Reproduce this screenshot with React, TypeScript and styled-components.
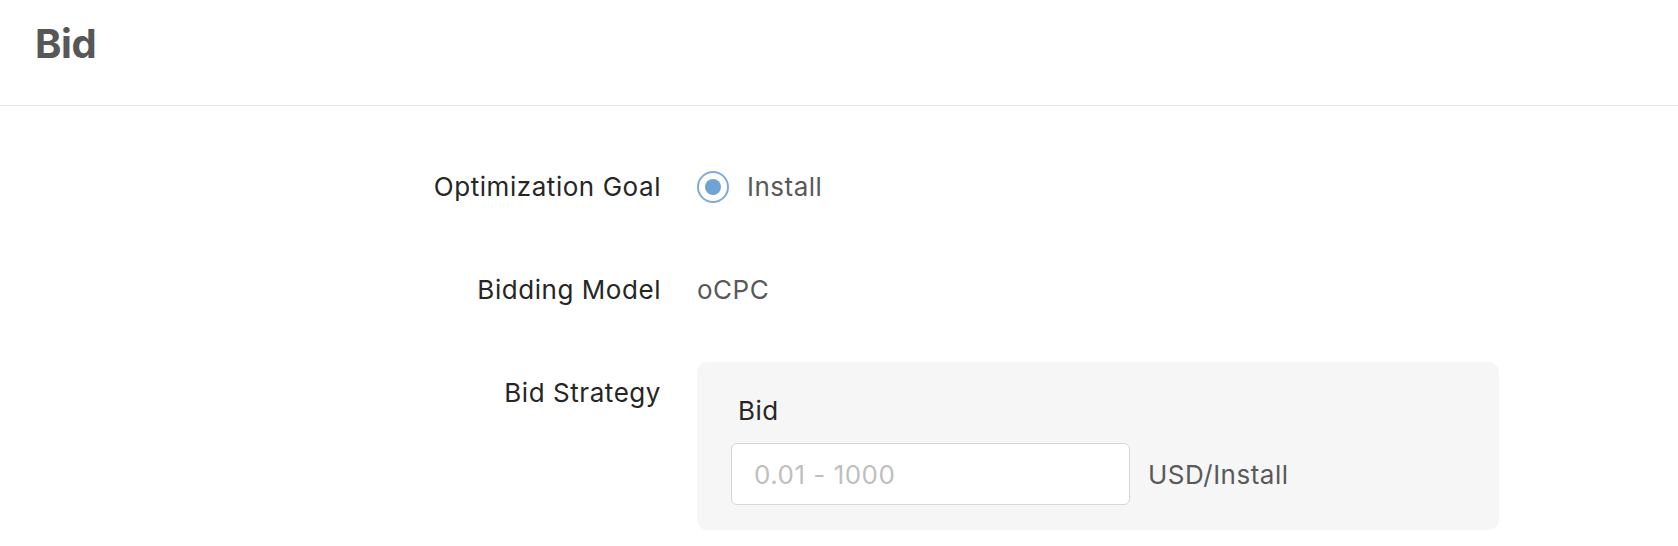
import styled, { createGlobalStyle } from "styled-components";

const GlobalStyle = createGlobalStyle`
  html, body {
    margin: 0;
    padding: 0;
    background: #fff;
    font-family: Inter, "Noto Sans", "Liberation Sans", sans-serif;
  }
  * { box-sizing: border-box; }
`;

const Page = styled.div`
  width: 100%;
  min-height: 546px;
  background: #fff;
`;

const Header = styled.header`
  height: 106px;
  padding: 20px 35px 0;
  border-bottom: 1px solid #e6e6e6;
`;

const Title = styled.h1`
  margin: 0;
  font-size: 40px;
  line-height: 48px;
  font-weight: 700;
  color: #575757;
  letter-spacing: -0.4px;
`;

const Form = styled.div`
  padding-top: 53px;
`;

const Row = styled.div<{ $top?: number; $align?: string }>`
  display: grid;
  grid-template-columns: 661px 1fr;
  column-gap: 36px;
  align-items: ${(p) => p.$align || "center"};
  margin-top: ${(p) => p.$top || 0}px;
  min-height: 56px;
`;

const Label = styled.div<{ $pad?: number }>`
  text-align: right;
  font-size: 26px;
  line-height: 40px;
  letter-spacing: 0.55px;
  color: #262626;
  padding-top: ${(p) => p.$pad || 0}px;
`;

const Value = styled.div`
  font-size: 26px;
  line-height: 40px;
  letter-spacing: 0.5px;
  color: #595959;
`;

const RadioLabel = styled.label`
  display: inline-flex;
  align-items: center;
  gap: 18px;
  font-size: 26px;
  line-height: 40px;
  letter-spacing: 0.5px;
  color: #595959;
`;

const RadioCircle = styled.span`
  width: 32px;
  height: 32px;
  border-radius: 50%;
  border: 2px solid #7eabd9;
  display: flex;
  align-items: center;
  justify-content: center;
  background: #fff;

  &::after {
    content: "";
    width: 16px;
    height: 16px;
    border-radius: 50%;
    background: #6fa3d6;
  }
`;

const StrategyBox = styled.div`
  width: 802px;
  height: 168px;
  background: #f6f6f6;
  border-radius: 10px;
  padding: 31px 34px 0;
`;

const SubLabel = styled.div`
  font-size: 26px;
  line-height: 36px;
  letter-spacing: 0.5px;
  color: #262626;
  margin-bottom: 14px;
  padding-left: 7px;
`;

const InputLine = styled.div`
  display: flex;
  align-items: center;
  gap: 18px;
`;

const Input = styled.input`
  width: 399px;
  height: 62px;
  border: 1px solid #d6d6d6;
  border-radius: 6px;
  background: #fff;
  padding: 0 22px;
  font-family: inherit;
  font-size: 26px;
  letter-spacing: 0.5px;
  color: #262626;
  outline: none;

  &::placeholder {
    color: #bfbfbf;
  }
`;

const Unit = styled.span`
  font-size: 26px;
  letter-spacing: 0.5px;
  color: #595959;
`;

export default function App() {
  return (
    <Page>
      <GlobalStyle />
      <Header>
        <Title>Bid</Title>
      </Header>
      <Form>
        <Row>
          <Label>Optimization Goal</Label>
          <div>
            <RadioLabel>
              <RadioCircle />
              Install
            </RadioLabel>
          </div>
        </Row>
        <Row $top={47}>
          <Label>Bidding Model</Label>
          <Value>oCPC</Value>
        </Row>
        <Row $top={44} $align="start">
          <Label $pad={11}>Bid Strategy</Label>
          <StrategyBox>
            <SubLabel>Bid</SubLabel>
            <InputLine>
              <Input placeholder="0.01 - 1000" />
              <Unit>USD/Install</Unit>
            </InputLine>
          </StrategyBox>
        </Row>
      </Form>
    </Page>
  );
}
